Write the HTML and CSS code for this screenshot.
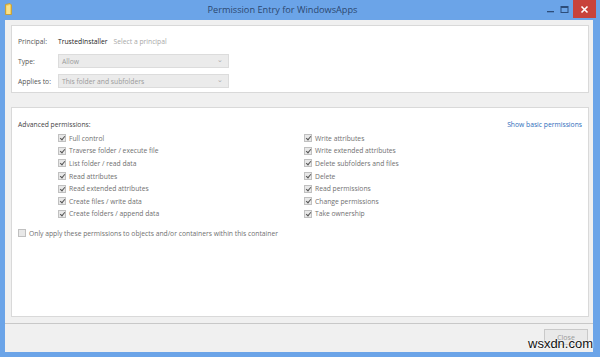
FILE: index.html
```html
<!DOCTYPE html>
<html lang="en">
<head>
  <meta charset="UTF-8" />
  <title>Permission Entry for WindowsApps</title>
  <link rel="stylesheet" href="styles.css">
</head>
<body>
  <div class="window">
    <!-- barra de titulo -->
    <div class="titlebar">
      <svg class="app-icon" width="7" height="12" viewBox="0 0 7 12">
        <path d="M0.5 1.5 L5 0.5 L6.5 2 L6.5 11.5 L0.5 11.5 Z" fill="#f3cf5a" stroke="#c99a2a" stroke-width="0.8"/>
        <path d="M1.5 3 L5 2 L5 11 L1.5 11 Z" fill="#fbe38c"/>
      </svg>
      <div class="title">Permission Entry for WindowsApps</div>
      <div class="controls">
        <span class="ctl min"><svg width="9" height="9" viewBox="0 0 9 9"><rect x="1" y="6" width="7" height="1.3" fill="#2d4d7a"/></svg></span>
        <span class="ctl max"><svg width="9" height="9" viewBox="0 0 9 9"><rect x="1" y="1.5" width="7" height="6" fill="none" stroke="#2d4d7a" stroke-width="1"/><rect x="1" y="1.5" width="7" height="1.5" fill="#2d4d7a"/></svg></span>
        <span class="ctl close"><svg width="9" height="9" viewBox="0 0 9 9"><path d="M1.5 1.5 L7.5 7.5 M7.5 1.5 L1.5 7.5" stroke="#fff" stroke-width="1.6"/></svg></span>
      </div>
    </div>

    <div class="client">
      <!-- principal / tipo / aplica a -->
      <div class="panel top-panel">
        <div class="field">
          <span class="label">Principal:</span>
          <span class="principal">TrustedInstaller</span>
          <span class="select-link">Select a principal</span>
        </div>
        <div class="field">
          <span class="label">Type:</span>
          <div class="dropdown"><span>Allow</span><span class="caret">&#8964;</span></div>
        </div>
        <div class="field">
          <span class="label">Applies to:</span>
          <div class="dropdown"><span>This folder and subfolders</span><span class="caret">&#8964;</span></div>
        </div>
      </div>

      <!-- permisos avanzados -->
      <div class="panel adv-panel">
        <div class="adv-head">
          <span class="label">Advanced permissions:</span>
          <span class="link">Show basic permissions</span>
        </div>
        <div class="perm-grid">
          <div class="perm-col">
            <div class="perm"><span class="box checked"></span>Full control</div>
            <div class="perm"><span class="box checked"></span>Traverse folder / execute file</div>
            <div class="perm"><span class="box checked"></span>List folder / read data</div>
            <div class="perm"><span class="box checked"></span>Read attributes</div>
            <div class="perm"><span class="box checked"></span>Read extended attributes</div>
            <div class="perm"><span class="box checked"></span>Create files / write data</div>
            <div class="perm"><span class="box checked"></span>Create folders / append data</div>
          </div>
          <div class="perm-col">
            <div class="perm"><span class="box checked"></span>Write attributes</div>
            <div class="perm"><span class="box checked"></span>Write extended attributes</div>
            <div class="perm"><span class="box checked"></span>Delete subfolders and files</div>
            <div class="perm"><span class="box checked"></span>Delete</div>
            <div class="perm"><span class="box checked"></span>Read permissions</div>
            <div class="perm"><span class="box checked"></span>Change permissions</div>
            <div class="perm"><span class="box checked"></span>Take ownership</div>
          </div>
        </div>
        <div class="perm only"><span class="box"></span>Only apply these permissions to objects and/or containers within this container</div>
      </div>

      <div class="footer">
        <button class="btn">Close</button>
      </div>
    </div>
  </div>
  <div class="watermark">wsxdn.com</div>
</body>
</html>
```

FILE: styles.css
```css
* { box-sizing: border-box; }
body {
  margin: 0;
  width: 600px;
  height: 357px;
  overflow: hidden;
  font-family: 'Open Sans', sans-serif;
  font-size: 6.75px;
  color: #707070;
  position: relative;
}
.window {
  height: 357px;
  display: flex;
  flex-direction: column;
  background: #6ba4e8;
  padding: 0 7px 5px 5px;
}
/* barra de titulo */
.titlebar {
  height: 20px;
  display: flex;
  align-items: center;
  position: relative;
}
.app-icon {
  margin-top: -2px;
}
.title {
  flex: 1;
  text-align: center;
  font-size: 9.2px;
  color: #2c4870;
  margin-top: -2px;
  padding-left: 10px;
}
.controls {
  display: flex;
  align-self: flex-start;
  margin-right: -3px;
}
.ctl {
  display: flex;
  align-items: center;
  justify-content: center;
  height: 18px;
  width: 14px;
}
.ctl.close {
  width: 23px;
  background: #c8433b;
  margin-left: 2px;
}
/* area cliente */
.client {
  flex: 1;
  background: #f0f0f0;
  display: flex;
  flex-direction: column;
  padding: 5px 4px 0 6px;
}
.panel {
  background: #fff;
  border: 1px solid #d9d9d9;
}
.top-panel {
  height: 68px;
  padding: 8px 0 0 6px;
  display: flex;
  flex-direction: column;
  gap: 6px;
}
.field {
  display: flex;
  align-items: center;
  height: 14px;
}
.label {
  color: #555;
  width: 40px;
  flex: none;
}
.principal {
  color: #222;
  margin-right: 6px;
}
.select-link {
  color: #a8a8a8;
}
.dropdown {
  width: 171px;
  height: 14px;
  background: #ebebeb;
  border: 1px solid #dcdcdc;
  display: flex;
  align-items: center;
  justify-content: space-between;
  padding: 0 5px 0 3px;
  color: #9a9a9a;
}
.caret {
  font-size: 7px;
  color: #aaa;
  margin-top: -3px;
}
.adv-panel {
  flex: 1;
  margin-top: 14px;
  padding: 10px 6px 0 6px;
}
.adv-head {
  display: flex;
  justify-content: space-between;
  align-items: center;
  height: 12px;
}
.adv-head .label {
  width: auto;
  color: #444;
}
.link {
  color: #2d6dbb;
}
.perm-grid {
  display: grid;
  grid-template-columns: 246px 1fr;
  padding-left: 40px;
  margin-top: 2px;
}
.perm {
  display: flex;
  align-items: center;
  height: 12.6px;
  gap: 3px;
  white-space: nowrap;
}
.box {
  width: 8px;
  height: 8px;
  border: 1px solid #c0c0c0;
  background: #e8e8e8;
  position: relative;
  flex: none;
}
.box.checked::after {
  content: "";
  position: absolute;
  left: 2px;
  top: 0px;
  width: 2px;
  height: 4px;
  border: solid #555;
  border-width: 0 1.3px 1.3px 0;
  transform: rotate(40deg);
}
.only {
  margin-top: 7px;
}
.footer {
  height: 29px;
  border-top: 1px solid #c8c8c8;
  margin: 6px -4px 0 -6px;
  display: flex;
  justify-content: flex-end;
  align-items: flex-start;
  padding: 5px 5px 0 0;
}
.btn {
  width: 44px;
  height: 16px;
  font: 7px 'Open Sans', sans-serif;
  color: #999;
  background: #e9e9e9;
  border: 1px solid #c9c9c9;
  padding: 0;
}
.watermark {
  position: absolute;
  left: 528px;
  top: 336px;
  font-family: 'Liberation Sans', sans-serif;
  font-size: 13px;
  color: #111;
  text-shadow: 0 0 2px #fff, 0 0 2px #fff;
}
```
